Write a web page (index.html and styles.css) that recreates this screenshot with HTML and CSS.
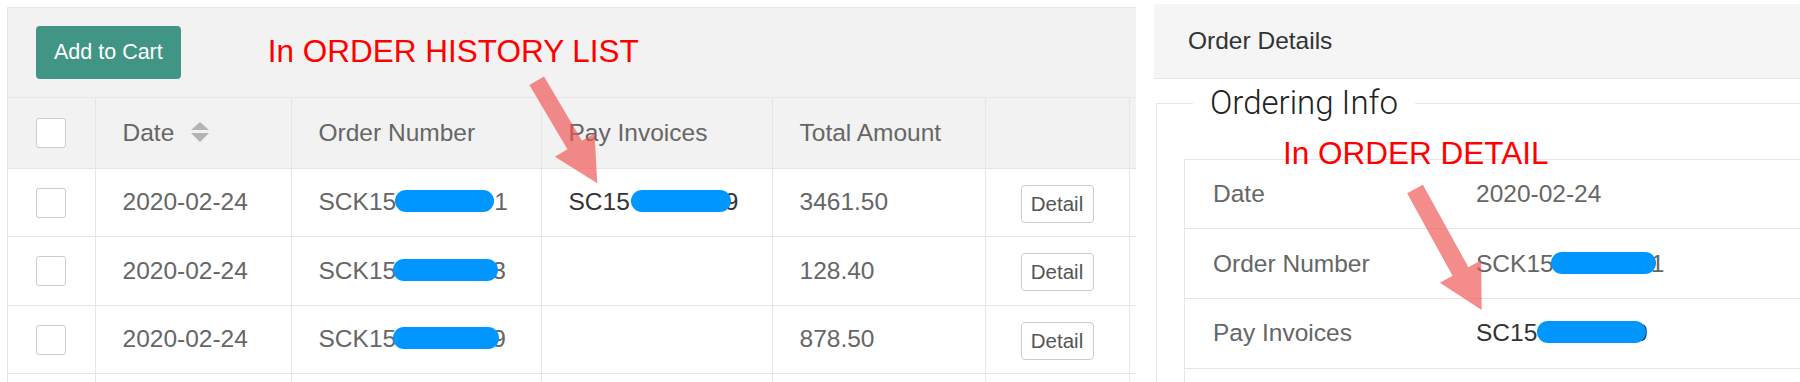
FILE: index.html
```html
<!DOCTYPE html>
<html lang="en">
<head>
  <meta charset="UTF-8">
  <title>Order History</title>
  <link rel="stylesheet" href="styles.css">
</head>
<body>
  <div class="page">
    <!-- Daftar riwayat pesanan -->
    <section class="history">
      <div class="toolbar">
        <button class="btn-cart">Add to Cart</button>
        <span class="note note-list">In ORDER HISTORY LIST</span>
      </div>
      <table class="orders">
        <colgroup>
          <col class="c-check"><col class="c-date"><col class="c-num"><col class="c-pay"><col class="c-total"><col class="c-act"><col class="c-more">
        </colgroup>
        <thead>
          <tr>
            <th class="check"><span class="box"></span></th>
            <th>Date<svg class="sort" viewBox="0 0 18 20"><path d="M0 8 L9 0 L18 8 Z M0 11 L18 11 L9 20 Z"/></svg></th>
            <th>Order Number</th>
            <th>Pay Invoices</th>
            <th>Total Amount</th>
            <th></th>
            <th></th>
          </tr>
        </thead>
        <tbody>
          <tr>
            <td class="check"><span class="box"></span></td>
            <td>2020-02-24</td>
            <td>SCK15<span class="mask m-1"></span>1</td>
            <td class="dark">SC15<span class="mask m-4"></span>9</td>
            <td>3461.50</td>
            <td class="act"><button class="btn-detail">Detail</button></td>
            <td></td>
          </tr>
          <tr>
            <td class="check"><span class="box"></span></td>
            <td>2020-02-24</td>
            <td>SCK15<span class="mask m-2"></span>3</td>
            <td></td>
            <td>128.40</td>
            <td class="act"><button class="btn-detail">Detail</button></td>
            <td></td>
          </tr>
          <tr>
            <td class="check"><span class="box"></span></td>
            <td>2020-02-24</td>
            <td>SCK15<span class="mask m-3"></span>9</td>
            <td></td>
            <td>878.50</td>
            <td class="act"><button class="btn-detail">Detail</button></td>
            <td></td>
          </tr>
          <tr>
            <td class="check"></td><td></td><td></td><td></td><td></td><td></td><td></td>
          </tr>
        </tbody>
      </table>
    </section>

    <!-- Detail pesanan -->
    <section class="detail">
      <div class="detail-head">Order Details</div>
      <div class="detail-body">
        <fieldset>
          <legend>Ordering Info</legend>
          <table class="info">
            <tr><td class="label">Date</td><td>2020-02-24</td></tr>
            <tr><td class="label">Order Number</td><td>SCK15<span class="mask m-5"></span>1</td></tr>
            <tr><td class="label">Pay Invoices</td><td class="dark">SC15<span class="mask m-6"></span>9</td></tr>
            <tr><td class="label"></td><td></td></tr>
          </table>
        </fieldset>
        <span class="note note-detail">In ORDER DETAIL</span>
      </div>
    </section>

    <!-- Panah anotasi -->
    <svg class="arrows" viewBox="0 0 1800 382">
      <polygon points="529.4,85 544,76.4 582,140.7 594.5,133.3 597.3,183.3 554.9,156.7 567.4,149.3"/>
      <polygon points="1407.1,193.3 1422.9,184.7 1468.4,267.2 1481.1,260.2 1481.7,310 1439.9,282.8 1452.6,275.8"/>
    </svg>
  </div>
</body>
</html>
```

FILE: styles.css
```css
body {
  margin: 0;
  background: #fff;
  font-family: 'Liberation Sans', Arial, sans-serif;
  color: #666;
  overflow: hidden;
}

.page {
  position: relative;
  display: flex;
  align-items: flex-start;
  width: 1800px;
  height: 382px;
  padding-left: 7px;
  box-sizing: border-box;
  overflow: hidden;
}

/* Riwayat pesanan */
.history {
  width: 1128px;
  margin-top: 7px;
  border-top: 1px solid #e6e6e6;
  border-left: 1px solid #e6e6e6;
  overflow: hidden;
  flex-shrink: 0;
}

.toolbar {
  display: flex;
  align-items: center;
  height: 89px;
  padding-left: 28px;
  background: #f2f2f2;
  border-bottom: 1px solid #e6e6e6;
}

.btn-cart {
  height: 53px;
  padding: 0 18px;
  border: none;
  border-radius: 4px;
  background: #409585;
  color: #fff;
  font-family: inherit;
  font-size: 21.5px;
}

.note {
  color: #f00;
  font-size: 31.5px;
  line-height: 1;
  white-space: nowrap;
}
.note-list {
  margin-left: 87px;
  margin-top: -1px;
}

.orders {
  width: 1271px;
  table-layout: fixed;
  border-collapse: collapse;
  font-size: 24.5px;
}
.c-check { width: 87px; }
.c-date { width: 196px; }
.c-num { width: 250px; }
.c-pay { width: 231px; }
.c-total { width: 213px; }
.c-act { width: 144px; }
.c-more { width: 150px; }

.orders th,
.orders td {
  height: 68.5px;
  padding: 0 0 0 27px;
  border-right: 1px solid #e6e6e6;
  border-bottom: 1px solid #e6e6e6;
  text-align: left;
  font-weight: normal;
  white-space: nowrap;
  box-sizing: border-box;
}
.orders th {
  height: 70px;
  background: #f2f2f2;
}
.orders .check,
.orders .act {
  padding: 0;
  text-align: center;
}
.orders .act {
  padding-top: 3px;
}

.box {
  display: inline-block;
  width: 30px;
  height: 30px;
  border: 1px solid #ccc;
  border-radius: 3px;
  background: #fff;
  box-sizing: border-box;
  vertical-align: middle;
}

.sort {
  width: 18px;
  height: 20px;
  margin-left: 17px;
  vertical-align: -1px;
  fill: #b3b3b3;
}

.dark {
  color: #333;
}

.mask {
  position: relative;
  z-index: 1;
  display: inline-block;
  height: 22px;
  border-radius: 11px;
  background: #0096ff;
  vertical-align: -2px;
}
.m-1 { width: 99px; margin-left: -1px; }
.m-2 { width: 105px; margin-left: -3px; margin-right: -6px; }
.m-3 { width: 106px; margin-left: -3px; margin-right: -7px; }
.m-4 { width: 100px; margin-left: 1px; margin-right: -6px; }
.m-5 { width: 105px; margin-left: -3px; margin-right: -5px; }
.m-6 { width: 109px; margin-right: -12px; }

.btn-detail {
  width: 73px;
  height: 38px;
  padding: 0;
  border: 1px solid #ccc;
  border-radius: 4px;
  background: #fff;
  color: #555;
  font-family: inherit;
  font-size: 20.5px;
}

/* Detail pesanan */
.detail {
  position: relative;
  flex: 1;
  margin-left: 18px;
  margin-top: 4px;
  overflow: hidden;
}

.detail-head {
  display: flex;
  align-items: center;
  height: 75px;
  padding-left: 34px;
  background: #f5f5f5;
  border-bottom: 1px solid #e6e6e6;
  color: #333;
  font-size: 24.5px;
  box-sizing: border-box;
}

.detail-body {
  padding: 5px 0 0 2px;
}

fieldset {
  margin: 0;
  padding: 36px 0 0 27px;
  border: 1px solid #e6e6e6;
  border-right: none;
}

legend {
  margin-left: 9px;
  padding: 0 17px;
  font-family: Roboto, 'Liberation Sans', sans-serif;
  font-weight: 300;
  font-size: 33px;
  line-height: 1.172;
  color: #222;
}

.info {
  width: 100%;
  border-collapse: collapse;
  border-top: 1px solid #e6e6e6;
  border-left: 1px solid #e6e6e6;
  font-size: 24.5px;
}
.info td {
  height: 68.7px;
  padding: 0;
  border-bottom: 1px solid #e6e6e6;
  white-space: nowrap;
}
.info .label {
  width: 263px;
  padding-left: 28px;
}

.note-detail {
  position: absolute;
  left: 129px;
  top: 134px;
}

/* Panah anotasi */
.arrows {
  position: absolute;
  top: 0;
  left: 0;
  width: 1800px;
  height: 382px;
  pointer-events: none;
  fill: rgba(240, 80, 80, 0.66);
}
```
